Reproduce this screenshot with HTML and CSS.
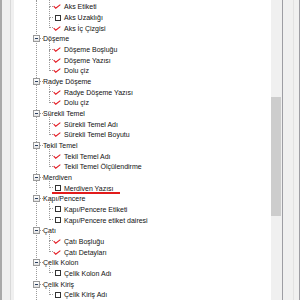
FILE: index.html
```html
<html>
<head>
    <link rel="stylesheet" href="styles.css">
</head>
<body>
    <div class="left-edge"></div>

    <div class="tree">
        <div class="tree-list">
            <div class="node"><span class="toggle"></span><span class="dash"></span><span class="label">Aks</span></div>
            <div class="leaf"><span class="slot"><svg class="check" viewBox="0 0 9 6"><polyline points="0.5,2.6 3,5 8.5,0.8"/></svg></span><span class="label">Aks Etiketi</span></div>
            <div class="leaf"><span class="slot"><span class="box"></span></span><span class="label">Aks Uzaklığı</span></div>
            <div class="leaf"><span class="slot"><svg class="check" viewBox="0 0 9 6"><polyline points="0.5,2.6 3,5 8.5,0.8"/></svg></span><span class="label">Aks İç Çizgisi</span></div>

            <div class="node"><span class="toggle"></span><span class="dash"></span><span class="label">Döşeme</span></div>
            <div class="leaf"><span class="slot"><svg class="check" viewBox="0 0 9 6"><polyline points="0.5,2.6 3,5 8.5,0.8"/></svg></span><span class="label">Döşeme Boşluğu</span></div>
            <div class="leaf"><span class="slot"><svg class="check" viewBox="0 0 9 6"><polyline points="0.5,2.6 3,5 8.5,0.8"/></svg></span><span class="label">Döşeme Yazısı</span></div>
            <div class="leaf"><span class="slot"><svg class="check" viewBox="0 0 9 6"><polyline points="0.5,2.6 3,5 8.5,0.8"/></svg></span><span class="label">Dolu çiz</span></div>

            <div class="node"><span class="toggle"></span><span class="dash"></span><span class="label">Radye Döşeme</span></div>
            <div class="leaf"><span class="slot"><svg class="check" viewBox="0 0 9 6"><polyline points="0.5,2.6 3,5 8.5,0.8"/></svg></span><span class="label">Radye Döşeme Yazısı</span></div>
            <div class="leaf"><span class="slot"><svg class="check" viewBox="0 0 9 6"><polyline points="0.5,2.6 3,5 8.5,0.8"/></svg></span><span class="label">Dolu çiz</span></div>

            <div class="node"><span class="toggle"></span><span class="dash"></span><span class="label">Sürekli Temel</span></div>
            <div class="leaf"><span class="slot"><svg class="check" viewBox="0 0 9 6"><polyline points="0.5,2.6 3,5 8.5,0.8"/></svg></span><span class="label">Sürekli Temel Adı</span></div>
            <div class="leaf"><span class="slot"><svg class="check" viewBox="0 0 9 6"><polyline points="0.5,2.6 3,5 8.5,0.8"/></svg></span><span class="label">Sürekli Temel Boyutu</span></div>

            <div class="node"><span class="toggle"></span><span class="dash"></span><span class="label">Tekil Temel</span></div>
            <div class="leaf"><span class="slot"><svg class="check" viewBox="0 0 9 6"><polyline points="0.5,2.6 3,5 8.5,0.8"/></svg></span><span class="label">Tekil Temel Adı</span></div>
            <div class="leaf"><span class="slot"><svg class="check" viewBox="0 0 9 6"><polyline points="0.5,2.6 3,5 8.5,0.8"/></svg></span><span class="label">Tekil Temel Ölçülendirme</span></div>

            <div class="node"><span class="toggle"></span><span class="dash"></span><span class="label">Merdiven</span></div>
            <div class="leaf"><span class="slot"><span class="box"></span></span><span class="label">Merdiven Yazısı</span></div>

            <div class="node"><span class="toggle"></span><span class="dash"></span><span class="label">Kapı/Pencere</span></div>
            <div class="leaf"><span class="slot"><span class="box"></span></span><span class="label">Kapı/Pencere Etiketi</span></div>
            <div class="leaf"><span class="slot"><span class="box"></span></span><span class="label">Kapı/Pencere etiket dairesi</span></div>

            <div class="node"><span class="toggle"></span><span class="dash"></span><span class="label">Çatı</span></div>
            <div class="leaf"><span class="slot"><svg class="check" viewBox="0 0 9 6"><polyline points="0.5,2.6 3,5 8.5,0.8"/></svg></span><span class="label">Çatı Boşluğu</span></div>
            <div class="leaf"><span class="slot"><svg class="check" viewBox="0 0 9 6"><polyline points="0.5,2.6 3,5 8.5,0.8"/></svg></span><span class="label">Çatı Detayları</span></div>

            <div class="node"><span class="toggle"></span><span class="dash"></span><span class="label">Çelik Kolon</span></div>
            <div class="leaf"><span class="slot"><span class="box"></span></span><span class="label">Çelik Kolon Adı</span></div>

            <div class="node"><span class="toggle"></span><span class="dash"></span><span class="label">Çelik Kiriş</span></div>
            <div class="leaf"><span class="slot"><span class="box"></span></span><span class="label">Çelik Kiriş Adı</span></div>
        </div>
    </div>

    <div class="scrollbar">
        <div class="thumb"></div>
    </div>

    <div class="right-edge"></div>

    <div class="mark"></div>
</body>
</html>
```

FILE: styles.css
```css
body {
    margin: 0;
    height: 300px;
    display: flex;
    overflow: hidden;
    font-family: "Liberation Sans", Arial, sans-serif;
    font-size: 7px;
    color: #111;
    background-color: #f0f0f0;
}

.left-edge {
    width: 12px;
    border-left: 2px solid #a9a9a9;
    background: linear-gradient(to right, #f0f0f0 8px, #d9d9d9 8px, #d9d9d9 9px, #f0f0f0 9px);
}

.tree {
    flex: 1;
    position: relative;
    overflow: hidden;
    background-color: white;
}

/* root line that joins all top level nodes */
.tree::before {
    content: "";
    position: absolute;
    left: 22px;
    top: 0;
    bottom: 0;
    border-left: 1px dotted #9a9a9a;
}

.tree-list {
    margin-top: -9px;
}

.node,
.leaf {
    position: relative;
    height: 10.667px;
    display: flex;
    align-items: center;
    white-space: nowrap;
}

.node {
    padding-left: 19px;
}

.toggle {
    position: relative;
    width: 7px;
    height: 7px;
    box-sizing: border-box;
    border: 1px solid #9a9a9a;
    background: linear-gradient(#ffffff, #e2e2e2);
    z-index: 1;
}

.toggle::after {
    content: "";
    position: absolute;
    left: 1px;
    top: 2px;
    width: 3px;
    height: 1px;
    background-color: #2a3f5f;
}

.dash {
    width: 3px;
    border-top: 1px dotted #9a9a9a;
}

.leaf {
    padding-left: 38px;
}

/* L shaped connector from the parent down to this item */
.leaf::before {
    content: "";
    position: absolute;
    left: 35px;
    top: -50%;
    width: 4px;
    height: 100%;
    box-sizing: border-box;
    border-left: 1px dotted #9a9a9a;
    border-bottom: 1px dotted #9a9a9a;
}

.slot {
    width: 11px;
    height: 10px;
    display: flex;
    align-items: center;
}

.check {
    width: 8px;
    height: 5px;
    margin-left: 1px;
    fill: none;
    stroke: #e3161e;
    stroke-width: 1.3;
}

.box {
    width: 6px;
    height: 6px;
    margin-left: 3px;
    box-sizing: border-box;
    border: 1px solid #333;
    background-color: white;
}

.leaf .label {
    margin-left: 1px;
}

.scrollbar {
    width: 11px;
    background-color: #f0f0f0;
}

.thumb {
    width: 10px;
    height: 119px;
    margin-top: 97px;
    background-color: #cdcdcd;
}

.right-edge {
    width: 16px;
    border-left: 1px solid #9d9da3;
    border-right: 1px solid #9d9da3;
    background: linear-gradient(to right, #f0f0f0 10px, #e2e2e2 10px, #e2e2e2 11px, #f0f0f0 11px);
}

/* red annotation line under "Merdiven Yazısı" */
.mark {
    position: absolute;
    left: 52px;
    top: 192px;
    width: 68px;
    height: 1.5px;
    background-color: #e21b1b;
}
```
